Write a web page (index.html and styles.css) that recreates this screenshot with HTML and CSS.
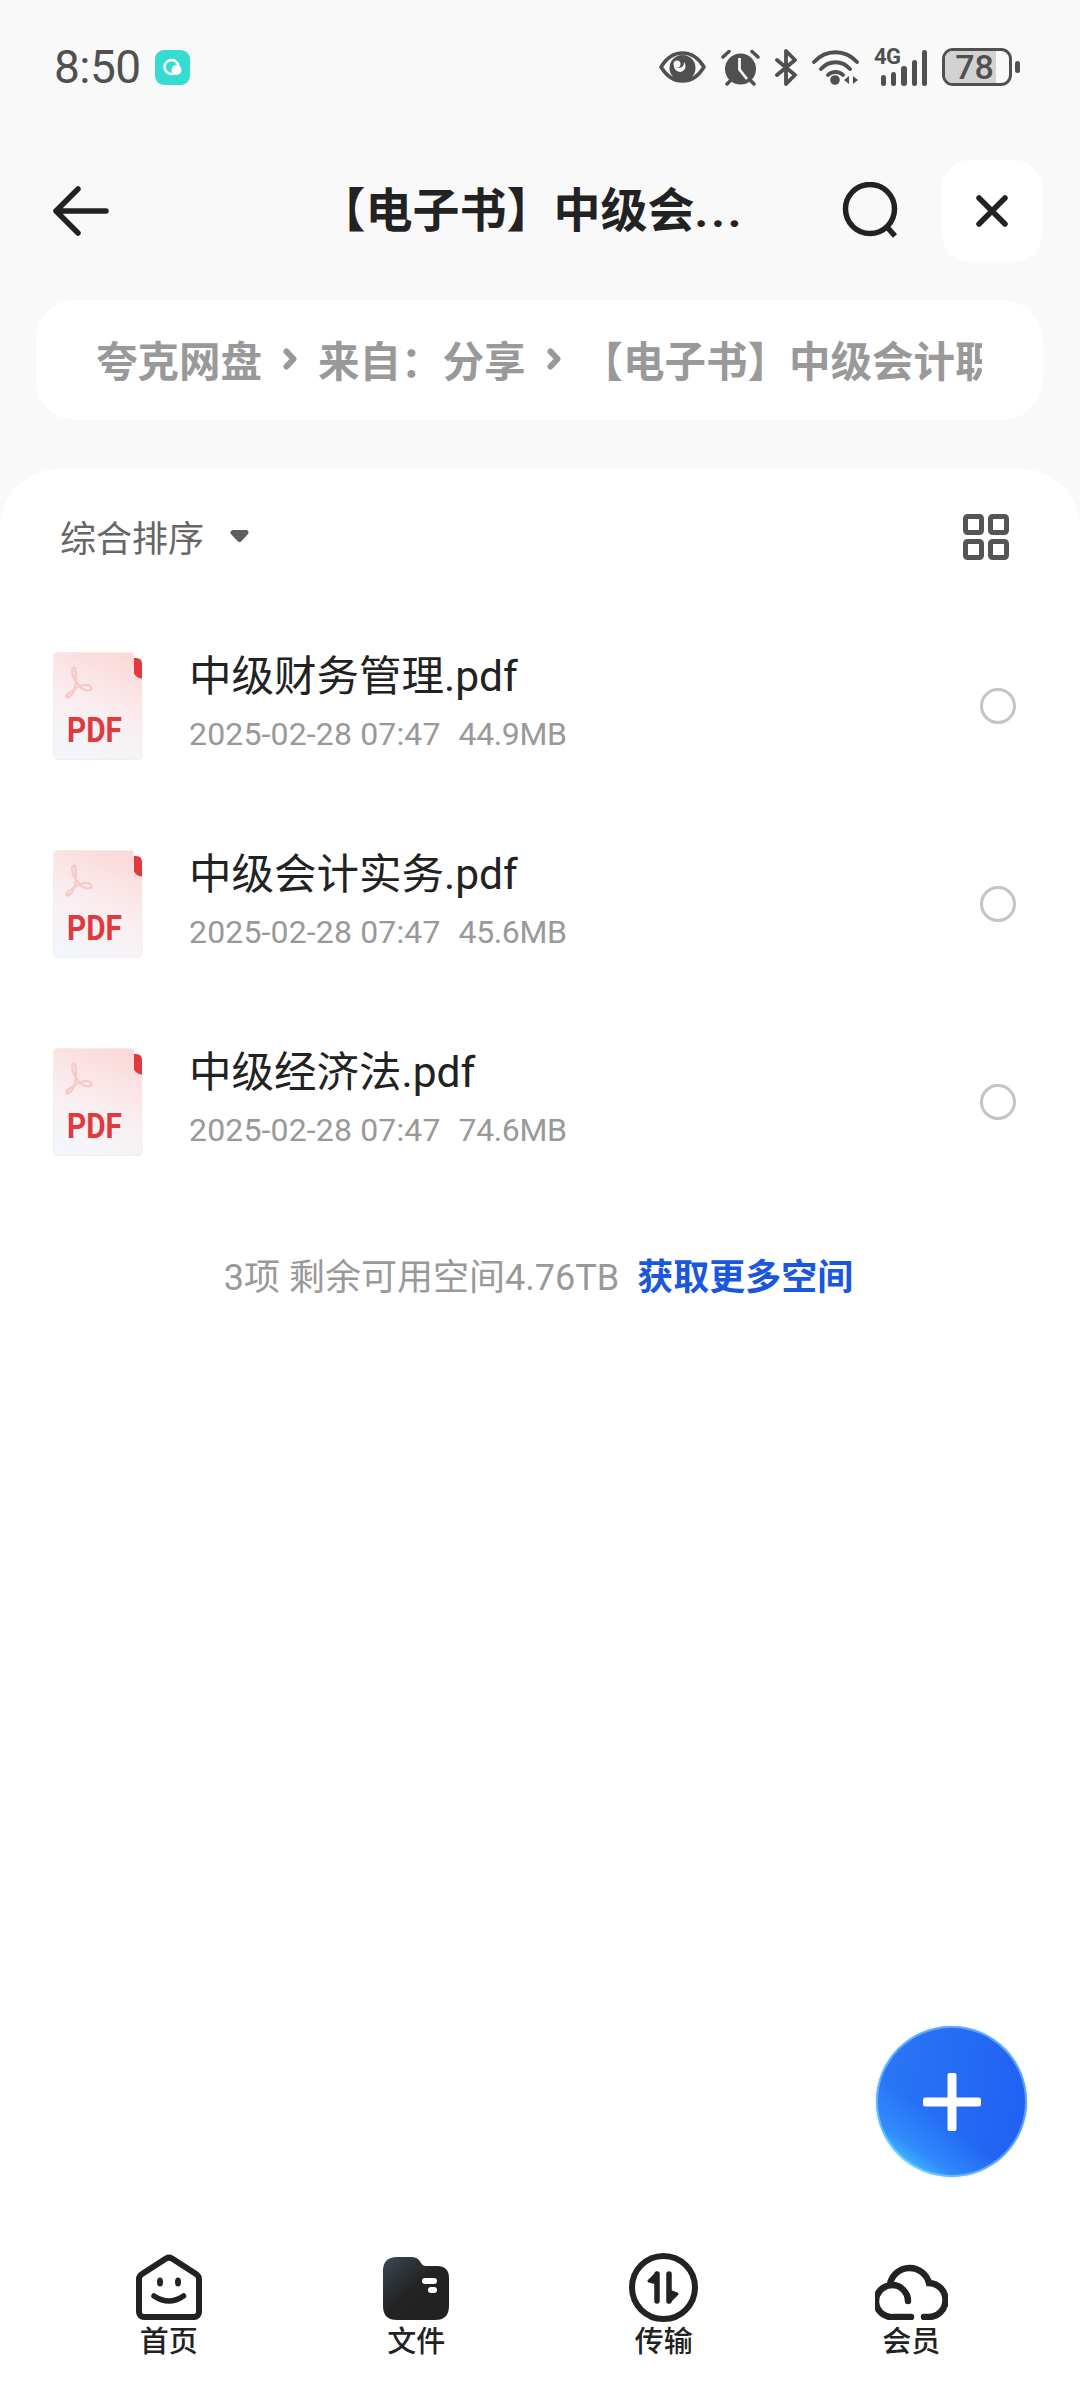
FILE: index.html
```html
<!DOCTYPE html>
<html lang="zh-CN">
<head>
<meta charset="utf-8">
<title>夸克网盘</title>
<link rel="stylesheet" href="styles.css">
</head>
<body>
<div class="page">
  <svg width="0" height="0" class="defs">
    <defs>
      <linearGradient id="pdfbg" x1="0.75" y1="0" x2="0.4" y2="1">
        <stop offset="0" stop-color="#fcd8d8"/><stop offset="0.55" stop-color="#faeef0"/><stop offset="1" stop-color="#f3f6fa"/>
      </linearGradient>
      <linearGradient id="folderbg" x1="0" y1="0" x2="0.7" y2="0.75">
        <stop offset="0" stop-color="#3d4855"/><stop offset="0.65" stop-color="#232323"/><stop offset="1" stop-color="#222"/>
      </linearGradient>
      <symbol id="pdf" viewBox="0 0 90 108">
        <path d="M5 0.5H78q3 0 3 3V6h2q6 0 6 6V103q0 4.500-4.500 4.500H5q-4.500 0-4.500-4.500V5Q0.500 0.500 5 0.500z" fill="url(#pdfbg)" stroke="#f0eeee" stroke-width="1"/>
        <path d="M81 6h2q6 0 6 6v14.500q-5 0-8-5z" fill="#e0393e"/>
        <path d="M22 16c-4-2-4 6 0 12c3 5 6 9 10 10c4 1 8 0 6-3c-3-4-12-2-22 6c-4 3-3 6 0 4c5-3 9-14 6-29z" fill="none" stroke="#f6c8c8" stroke-width="2.200"/>
        <text x="14" y="90" class="pdf-label" textLength="55" lengthAdjust="spacingAndGlyphs">PDF</text>
      </symbol>
    </defs>
  </svg>

  <header class="status">
    <div class="status-left">
      <span class="clock">8:50</span>
      <svg class="app-dot" width="35" height="35" viewBox="0 0 35 35"><rect width="35" height="35" rx="9" fill="#36dcd2"/><circle cx="16.500" cy="17" r="7" fill="none" stroke="#fff" stroke-width="2.500"/><circle cx="21.500" cy="20" r="5" fill="#fff"/></svg>
    </div>
    <div class="status-right">
      <svg width="47" height="32" viewBox="0 0 47 32"><path d="M2 16C8 6 15 2 23.500 2S39 6 45 16C39 26 32 30 23.500 30S8 26 2 16z" fill="none" stroke="#505050" stroke-width="3.500" stroke-linejoin="round"/><circle cx="23.500" cy="17" r="13" fill="#505050"/><path d="M15 14a6 6 0 0 0 9 6a6 6 0 0 0 1-9a6 6 0 0 1-2 5a6 6 0 0 1-8-2z" fill="#f9f9f9"/><circle cx="18" cy="13" r="3.500" fill="#f9f9f9"/></svg>
      <svg width="39" height="37" viewBox="0 0 39 37"><circle cx="19.500" cy="20" r="15.500" fill="#505050"/><path d="M2 8L8 2.500M37 8L31 2.500M6 35l4-4M33 35l-4-4" stroke="#505050" stroke-width="3.500" stroke-linecap="round"/><path d="M18.500 9V20.500L26 30" fill="none" stroke="#f9f9f9" stroke-width="2.800"/></svg>
      <svg width="22" height="37" viewBox="0 0 22 37"><path d="M2 11L20 26L11 35V2L20 11L2 26" fill="none" stroke="#505050" stroke-width="3.800" stroke-linejoin="round" stroke-linecap="round"/></svg>
      <svg width="47" height="36" viewBox="0 0 47 36"><path d="M2 13C14 0 33 0 45 13M9 20C17 11 30 11 38 20M16 26C20 22 27 22 31 26" fill="none" stroke="#505050" stroke-width="3.800" stroke-linecap="round"/><circle cx="23" cy="31" r="4.800" fill="#505050"/><path d="M32 31l5-4v8zM38.500 27v8M41 27l5 4-5 4z" fill="#505050"/></svg>
      <div class="signal">
        <span class="net">4G</span>
        <i class="bar b1"></i><i class="bar b2"></i><i class="bar b3"></i><i class="bar b4"></i><i class="bar b5"></i>
      </div>
      <div class="battery"><div class="battery-body"><span class="battery-fill"></span><span class="battery-num">78</span></div><i class="battery-nub"></i></div>
    </div>
  </header>

  <nav class="toolbar">
    <svg class="back" width="56" height="50" viewBox="0 0 56 50"><path d="M3 25H53M25 3L3 25L25 47" fill="none" stroke="#222" stroke-width="5.500" stroke-linecap="round" stroke-linejoin="round"/></svg>
    <h1 class="title">【电子书】中级会<span class="dots">...</span></h1>
    <svg class="search" width="58" height="58" viewBox="0 0 58 58"><circle cx="28" cy="27" r="24.500" fill="none" stroke="#222" stroke-width="5.500"/><path d="M45 45L53 54" stroke="#222" stroke-width="5.500"/></svg>
    <button class="close"><svg width="32" height="32" viewBox="0 0 32 32"><path d="M3 3L29 29M29 3L3 29" stroke="#222" stroke-width="5.500" stroke-linecap="round"/></svg></button>
  </nav>

  <div class="crumbs">
    <div class="crumb-track">
      <span>夸克网盘</span>
      <svg class="chev" width="14" height="22" viewBox="0 0 14 22"><path d="M3.500 3.500L10.500 11L3.500 18.500" fill="none" stroke="#999" stroke-width="6" stroke-linejoin="round" stroke-linecap="round"/></svg>
      <span>来自：分享</span>
      <svg class="chev" width="14" height="22" viewBox="0 0 14 22"><path d="M3.500 3.500L10.500 11L3.500 18.500" fill="none" stroke="#999" stroke-width="6" stroke-linejoin="round" stroke-linecap="round"/></svg>
      <span>【电子书】中级会计职称</span>
    </div>
  </div>

  <main class="sheet">
    <div class="sortbar">
      <div class="sort">
        <span>综合排序</span>
        <svg width="21" height="14" viewBox="0 0 21 14"><path d="M4 3.500H17L10.500 10.500z" fill="#5e5e5e" stroke="#5e5e5e" stroke-width="5" stroke-linejoin="round"/></svg>
      </div>
      <svg class="view-toggle" width="46" height="46" viewBox="0 0 46 46"><g fill="none" stroke="#555" stroke-width="5"><rect x="2.500" y="2.500" width="16" height="16" rx="2"/><rect x="27.500" y="2.500" width="16" height="16" rx="2"/><rect x="2.500" y="27.500" width="16" height="16" rx="2"/><rect x="27.500" y="27.500" width="16" height="16" rx="2"/></g></svg>
    </div>

    <ul class="files">
      <li class="file">
        <svg class="file-icon"><use href="#pdf"/></svg>
        <div class="file-text"><div class="file-name">中级财务管理.pdf</div><div class="file-meta"><span class="meta-date">2025-02-28 07:47</span><span class="meta-size">44.9MB</span></div></div>
        <i class="radio"></i>
      </li>
      <li class="file">
        <svg class="file-icon"><use href="#pdf"/></svg>
        <div class="file-text"><div class="file-name">中级会计实务.pdf</div><div class="file-meta"><span class="meta-date">2025-02-28 07:47</span><span class="meta-size">45.6MB</span></div></div>
        <i class="radio"></i>
      </li>
      <li class="file">
        <svg class="file-icon"><use href="#pdf"/></svg>
        <div class="file-text"><div class="file-name">中级经济法.pdf</div><div class="file-meta"><span class="meta-date">2025-02-28 07:47</span><span class="meta-size">74.6MB</span></div></div>
        <i class="radio"></i>
      </li>
    </ul>

    <p class="summary"><span>3项 剩余可用空间4.76TB</span><a class="more">获取更多空间</a></p>

    <footer class="tabs">
      <div class="tab">
        <svg width="66" height="66" viewBox="0 0 66 66"><path d="M8 63H58a5 5 0 0 0 5-5V25a6 6 0 0 0-3-5L36 4.500a6 6 0 0 0-6 0L6 20a6 6 0 0 0-3 5V58a5 5 0 0 0 5 5z" fill="none" stroke="#222" stroke-width="6" stroke-linejoin="round"/><ellipse cx="24" cy="28" rx="3" ry="4.500" fill="#222"/><ellipse cx="42" cy="28" rx="3" ry="4.500" fill="#222"/><path d="M18 42Q33 52 47.500 42" fill="none" stroke="#222" stroke-width="5.500" stroke-linecap="round"/></svg>
        <span>首页</span>
      </div>
      <div class="tab">
        <svg width="66" height="66" viewBox="0 -3 66 66"><path d="M14 0h15q6 0 9 6q1.500 3 5 3h11q12 0 12 12v28q0 14-14 14H14Q0 63 0 49V14Q0 0 14 0z" fill="url(#folderbg)"/><rect x="39" y="21" width="15" height="6" rx="3" fill="#fff"/><rect x="45" y="30" width="9" height="6" rx="3" fill="#fff"/></svg>
        <span>文件</span>
      </div>
      <div class="tab">
        <svg width="69" height="69" viewBox="0 0 69 69" class="tab-round"><circle cx="34.500" cy="34.500" r="31.500" fill="none" stroke="#222" stroke-width="6"/><path d="M28 21V48M40 21V48" stroke="#222" stroke-width="5.500" stroke-linecap="round"/><path d="M28 20L20 28L28 30zM40 49L48 41L40 38z" fill="#222" stroke="#222" stroke-width="3" stroke-linejoin="round"/></svg>
        <span>传输</span>
      </div>
      <div class="tab">
        <svg width="73" height="66" viewBox="0 -7 73 66"><path d="M36 56H19a16 16 0 1 1 14-16M15 23a20 20 0 0 1 39-1A17 17 0 0 1 53 56H49" fill="none" stroke="#222" stroke-width="6.500" stroke-linecap="round"/></svg>
        <span>会员</span>
      </div>
    </footer>
  </main>

  <button class="fab"><svg width="58" height="58" viewBox="0 0 58 58"><rect x="24.500" y="0" width="9" height="58" rx="2" fill="#fff"/><rect x="0" y="24.500" width="58" height="9" rx="2" fill="#fff"/></svg></button>
</div>
</body>
</html>
```
FILE: styles.css
```css
* { box-sizing: border-box; }
html, body { margin: 0; padding: 0; }
body {
  width: 1080px;
  height: 2388px;
  overflow: hidden;
  background: #f9f9f9;
  font-family: Roboto, "Noto Sans CJK SC", sans-serif;
}
.page {
  position: relative;
  display: flex;
  flex-direction: column;
  width: 1080px;
  height: 2388px;
}
.defs { position: absolute; }

/* status bar */
.status {
  display: flex;
  justify-content: space-between;
  align-items: center;
  height: 40px;
  margin-top: 47px;
  padding: 0 60px 0 54px;
  color: #505050;
}
.status-left { display: flex; align-items: center; gap: 14px; }
.clock { font-size: 46px; line-height: 40px; letter-spacing: -0.5px; }
.status-right { display: flex; align-items: center; gap: 15px; }
.signal {
  position: relative;
  display: flex;
  align-items: flex-end;
  gap: 5px;
  width: 53px;
  height: 37px;
  padding-left: 7px;
}
.net {
  position: absolute;
  left: 0;
  top: -3px;
  font-size: 22px;
  line-height: 22px;
  font-weight: 700;
  letter-spacing: -0.5px;
}
.bar { display: block; width: 6px; border-radius: 3px; background: #505050; }
.b1 { height: 11px; }
.b2 { height: 14px; }
.b3 { height: 20px; }
.b4 { height: 26px; }
.b5 { height: 36px; }
.battery { display: flex; align-items: center; gap: 3px; }
.battery-body {
  position: relative;
  display: flex;
  align-items: center;
  justify-content: center;
  width: 70px;
  height: 38px;
  border: 3.5px solid #505050;
  border-radius: 11px;
  overflow: hidden;
}
.battery-fill { position: absolute; left: 0; top: 0; bottom: 0; width: 51px; background: #d2d2d2; }
.battery-num { position: relative; font-size: 34px; line-height: 32px; font-weight: 500; padding-right: 5px; }
.battery-nub { display: block; width: 5px; height: 12px; border-radius: 2.5px; background: #505050; }

/* toolbar */
.toolbar {
  display: flex;
  align-items: center;
  height: 102px;
  margin-top: 73px;
  padding: 0 38px 0 53px;
}
.title {
  flex: 1;
  margin: 0;
  padding-left: 112px;
  text-align: center;
  font-size: 47px;
  line-height: 60px;
  font-weight: 700;
  color: #222;
  white-space: nowrap;
}
.dots { letter-spacing: 3px; }
.search { margin-right: 42px; }
.close {
  display: flex;
  align-items: center;
  justify-content: center;
  width: 100px;
  height: 102px;
  padding: 0;
  border: 0;
  border-radius: 28px;
  background: #fff;
}

/* breadcrumb */
.crumbs {
  height: 120px;
  margin: 38px 37px 0 36px;
  padding: 0 61px 0 60px;
  border-radius: 40px;
  background: #fff;
}
.crumb-track {
  display: flex;
  align-items: center;
  gap: 21px;
  height: 100%;
  padding-bottom: 2px;
  overflow: hidden;
  white-space: nowrap;
  font-size: 41.500px;
  font-weight: 700;
  color: #999;
}
.crumb-track span { flex: none; }
.chev { flex: none; }

/* sheet */
.sheet {
  flex: 1;
  display: flex;
  flex-direction: column;
  margin-top: 49px;
  border-radius: 60px 60px 0 0;
  background: #fff;
}
.sortbar {
  display: flex;
  align-items: center;
  justify-content: space-between;
  height: 134px;
  margin-bottom: 4px;
  padding: 0 71px 0 60px;
}
.view-toggle { margin-top: 2px; }
.sort {
  display: flex;
  align-items: center;
  gap: 25px;
  font-size: 36px;
  color: #666;
}
.files { margin: 0; padding: 0; list-style: none; }
.file {
  display: flex;
  align-items: center;
  gap: 46px;
  height: 198px;
  padding: 0 64px 0 53px;
}
.file-icon { flex: none; width: 90px; height: 108px; }
.pdf-label { font-size: 35px; font-weight: 700; fill: #e0393e; font-family: Roboto, sans-serif; }
.file-text { flex: 1; }
.file-name { font-size: 42.500px; line-height: 56px; color: #222; }
.file-meta {
  display: flex;
  gap: 18px;
  font-size: 32px;
  line-height: 58px;
  color: #999;
}
.meta-date { letter-spacing: 0.15px; }
.meta-size { letter-spacing: -0.4px; }
.radio {
  flex: none;
  display: block;
  width: 36px;
  height: 36px;
  border: 3px solid #c4c4c4;
  border-radius: 50%;
}
.summary {
  display: flex;
  justify-content: center;
  align-items: center;
  gap: 18px;
  height: 146px;
  margin: 0;
  padding-right: 3px;
  font-size: 36px;
  color: #999;
}
.more { font-weight: 700; color: #1a57dd; }

/* tab bar */
.tabs {
  display: grid;
  grid-template-columns: repeat(4, 247.500px);
  margin-top: auto;
  padding: 0 0 28px 45px;
}
.tab {
  display: flex;
  flex-direction: column;
  align-items: center;
  gap: 4px;
  font-size: 29px;
  line-height: 36px;
  font-weight: 500;
  color: #222;
}
.tab-round { margin: -1px 0 -2px; }

/* floating action */
.fab {
  position: absolute;
  left: 876px;
  top: 2026px;
  display: flex;
  align-items: center;
  justify-content: center;
  width: 151px;
  height: 151px;
  padding: 0;
  border: 0;
  border-radius: 50%;
  background:
    linear-gradient(35deg, #45c8ff 10%, rgba(50, 150, 255, 0.7) 22%, rgba(40, 110, 250, 0) 40%),
    linear-gradient(100deg, #2b78f6 0%, #1f5ff2 100%);
  box-shadow: inset 0 0 0 2px rgba(170, 235, 255, 0.45), 0 0 3px rgba(130, 220, 255, 0.6);
}
```
